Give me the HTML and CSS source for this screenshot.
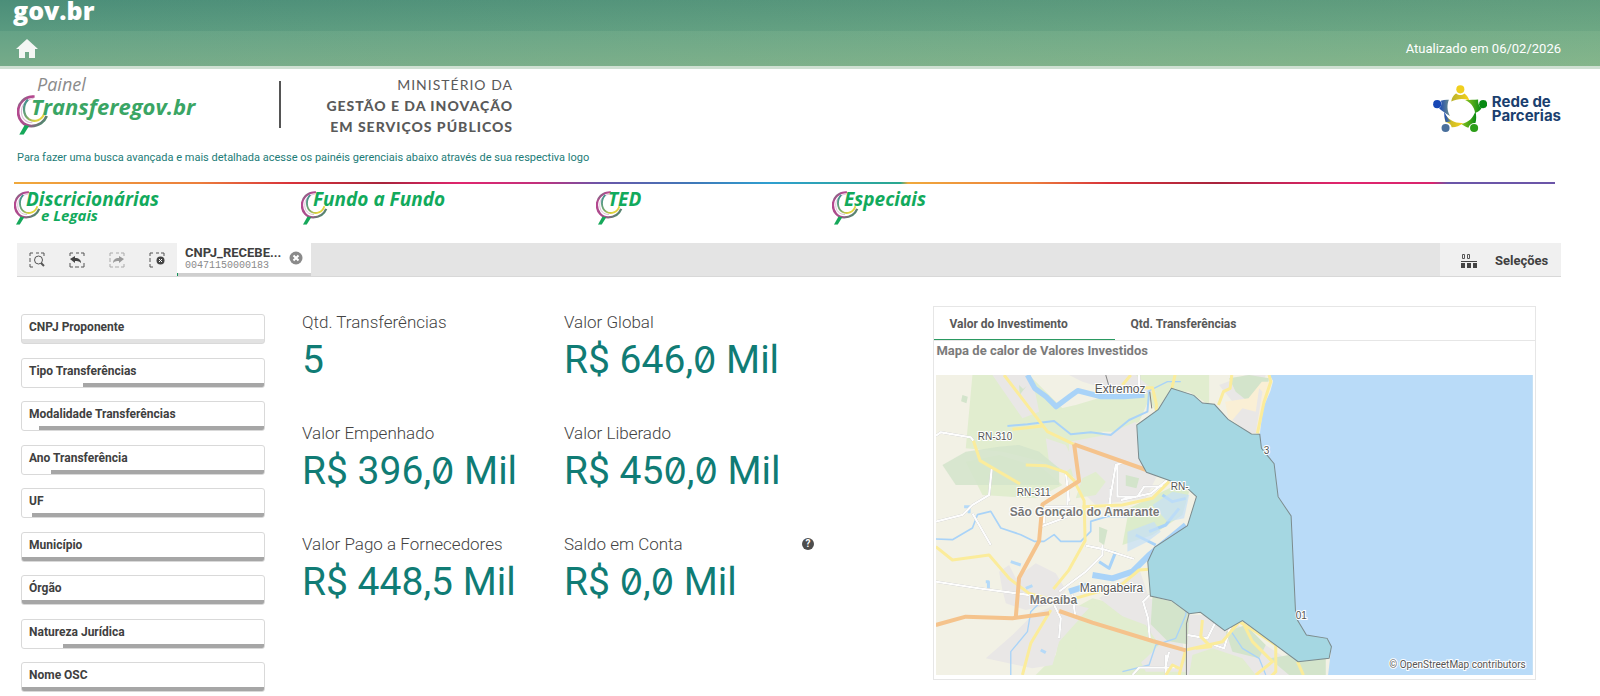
FILE: index.html
```html
<!DOCTYPE html>
<html lang="pt-BR">
<head>
    <meta charset="UTF-8">
    <meta name="viewport" content="width=device-width, initial-scale=1.0">
    <title>Painel Transferegov.br</title>
    <link rel="stylesheet" href="styles.css">
</head>
<body>
    <!-- Símbolos reutilizados -->
    <svg class="symbols" aria-hidden="true">
        <defs>
            <linearGradient id="ring" x1="0" y1="0" x2="1" y2="1">
                <stop offset="0" stop-color="#3f9c74"/>
                <stop offset="0.2" stop-color="#b5478f"/>
                <stop offset="0.65" stop-color="#a8508c"/>
                <stop offset="1" stop-color="#25a55f"/>
            </linearGradient>
            <linearGradient id="ring-in" x1="0" y1="0" x2="1" y2="1">
                <stop offset="0" stop-color="#3d8f96"/>
                <stop offset="0.5" stop-color="#7aa86a"/>
                <stop offset="0.8" stop-color="#e3d43c"/>
            </linearGradient>
            <symbol id="swirl" viewBox="0 0 30 36">
                <path d="M16 1C7 1 1 7 1 15c0 7 5 13 12 13 7 0 12-4 14-9" fill="none" stroke="url(#ring)" stroke-width="2.500"/>
                <path d="M15 3C8 4 4 9 4 15c0 6 4 10 10 10" fill="none" stroke="#d9bcd5" stroke-width="1"/>
                <path d="M10 4c-5 5-5 14 1 18 5 3 12 1 14-6" fill="none" stroke="url(#ring-in)" stroke-width="2"/>
                <path d="M7 27l4 1-5 8H2z" fill="#16a85a"/>
            </symbol>
        </defs>
    </svg>

    <header class="topbar">
        <a class="govbr" href="#">gov.br</a>
        <div class="topbar-row">
            <a class="home" href="#" aria-label="Início">
                <svg viewBox="0 0 22 20" width="22" height="20"><path d="M11 0L0 10h3v9h6v-6h4v6h6v-9h3z" fill="#f4f6f4"/></svg>
            </a>
            <span class="updated">Atualizado em 06/02/2026</span>
        </div>
    </header>

    <section class="brand">
        <div class="brand-logo">
            <svg class="brand-swirl" viewBox="0 0 30 36"><use href="#swirl"/></svg>
            <div class="brand-text">
                <span class="brand-top">Painel</span>
                <span class="brand-name">Transferegov.br</span>
            </div>
        </div>
        <div class="ministry">
            MINISTÉRIO DA<br>
            <b>GESTÃO E DA INOVAÇÃO</b><br>
            <b>EM SERVIÇOS PÚBLICOS</b>
        </div>
        <div class="rede">
            <svg viewBox="0 0 160 140" width="54" height="47">
                <defs>
                    <linearGradient id="rb"><stop offset="0" stop-color="#1747b5"/><stop offset="1" stop-color="#6f8f8a"/></linearGradient>
                    <linearGradient id="rg"><stop offset="0" stop-color="#8fc31f"/><stop offset="1" stop-color="#078a12"/></linearGradient>
                    <linearGradient id="ry"><stop offset="0" stop-color="#b9b12e"/><stop offset="1" stop-color="#f6d21a"/></linearGradient>
                </defs>
                <circle cx="81" cy="13" r="12" fill="#f0cf1e"/>
                <circle cx="12" cy="57" r="12" fill="#1747b5"/>
                <circle cx="149" cy="57" r="12" fill="#078a12"/>
                <circle cx="37" cy="128" r="12" fill="#496f9c"/>
                <circle cx="122" cy="128" r="12" fill="#2c9d18"/>
                <path d="M54 49c2-13 9-22 15-24 7 6 17 6 24 0 8 5 13 14 15 21-18-7-37-5-54 3z" fill="url(#ry)"/>
                <path d="M95 45c14-1 28-1 39-2-1 10 2 20 10 26-5 8-11 12-19 14-3-18-13-30-30-38z" fill="url(#rg)"/>
                <path d="M126 78c3 12 3 26 0 35-10-1-18 5-21 14-9-2-15-7-21-11 22-5 34-17 42-38z" fill="url(#rg)"/>
                <path d="M90 113c-11 8-24 14-35 13-1-8-9-15-18-15-3-8-3-16-2-23 14 18 32 27 55 25z" fill="url(#ry)"/>
                <path d="M53 109c-6 1-11 2-15 1-4-8-5-20-5-30 7 14 13 22 20 29z" fill="url(#rb)"/>
                <path d="M50 92C36 84 26 77 18 70c7-5 8-17 5-23 8-3 17-4 24-3-6 14-6 32 3 48z" fill="url(#rb)"/>
            </svg>
            <span class="rede-text">Rede de<br>Parcerias</span>
        </div>
    </section>

    <p class="hint">Para fazer uma busca avançada e mais detalhada acesse os painéis gerenciais abaixo através de sua respectiva logo</p>

    <nav class="panels">
        <a class="panel" href="#"><svg class="panel-swirl" viewBox="0 0 30 36"><use href="#swirl"/></svg><span>Discricionárias<small>e Legais</small></span></a>
        <a class="panel" href="#"><svg class="panel-swirl" viewBox="0 0 30 36"><use href="#swirl"/></svg><span>Fundo a Fundo</span></a>
        <a class="panel" href="#"><svg class="panel-swirl" viewBox="0 0 30 36"><use href="#swirl"/></svg><span>TED</span></a>
        <a class="panel" href="#"><svg class="panel-swirl" viewBox="0 0 30 36"><use href="#swirl"/></svg><span>Especiais</span></a>
    </nav>

    <!-- Barra de seleções -->
    <div class="selections">
        <div class="sel-tools">
            <button type="button" aria-label="Pesquisa inteligente">
                <svg viewBox="0 0 16 16" width="16" height="16" fill="none" stroke="#555">
                    <path d="M1 4V1h3M7 1h3M12 1h3v3M1 6v4M1 12v3h3"/>
                    <circle cx="9.500" cy="8" r="4"/><path d="M12 11l3 3" stroke-width="2"/>
                </svg>
            </button>
            <button type="button" aria-label="Voltar">
                <svg viewBox="0 0 16 16" width="16" height="16" fill="none" stroke="#555">
                    <path d="M1 4V1h3M7 1h3M12 1h3v3M1 11v4h3M6 15h4M12 15h3v-4"/>
                    <path d="M1 7l5-3v2c4 0 6 2 6 5-2-2-4-2-6-2v2z" fill="#444" stroke="none"/>
                </svg>
            </button>
            <button type="button" aria-label="Avançar" disabled>
                <svg viewBox="0 0 16 16" width="16" height="16" fill="none" stroke="#aaa">
                    <path d="M1 4V1h3M7 1h3M12 1h3v3M1 6v4M1 12v3h3M6 15h4M12 15h3v-3"/>
                    <path d="M15 7l-5-3v2c-4 0-6 2-6 5 2-2 4-2 6-2v2z" fill="#999" stroke="none"/>
                </svg>
            </button>
            <button type="button" aria-label="Limpar todas as seleções">
                <svg viewBox="0 0 16 16" width="16" height="16" fill="none" stroke="#555">
                    <path d="M1 4V1h3M7 1h3M12 1h3v3M1 6v4M1 12v3h3"/>
                    <circle cx="11.500" cy="8.500" r="4" fill="#444" stroke="none"/><path d="M10 7l3 3M13 7l-3 3" stroke="#fff"/>
                </svg>
            </button>
        </div>
        <div class="chip">
            <div class="chip-text">
                <b>CNPJ_RECEBE...</b>
                <span>00471150000183</span>
            </div>
            <button type="button" aria-label="Limpar seleção">
                <svg viewBox="0 0 14 14" width="14" height="14"><circle cx="7" cy="7" r="6.500" fill="#8a8a8a"/><path d="M4.500 4.500l5 5M9.500 4.500l-5 5" stroke="#fff" stroke-width="2"/></svg>
            </button>
        </div>
        <button type="button" class="sel-open">
            <svg viewBox="0 0 16 16" width="16" height="16"><path d="M1.500 1.500h2v4h-2zM6.500 1.500h2v4h-2z" fill="none" stroke="#555"/><path d="M0 8h16v1H0zM0 10h4v5H0zM6 10h4v5H6zM12 10h4v5h-4z" fill="#444"/></svg>
            Seleções
        </button>
    </div>

    <main class="content">
        <div class="filters">
            <button type="button" class="filter empty">CNPJ Proponente</button>
            <button type="button" class="filter" style="--sel: 25%">Tipo Transferências</button>
            <button type="button" class="filter" style="--sel: 7%">Modalidade Transferências</button>
            <button type="button" class="filter" style="--sel: 12%">Ano Transferência</button>
            <button type="button" class="filter" style="--sel: 4%">UF</button>
            <button type="button" class="filter">Município</button>
            <button type="button" class="filter">Órgão</button>
            <button type="button" class="filter" style="--sel: 17%">Natureza Jurídica</button>
            <button type="button" class="filter">Nome OSC</button>
        </div>

        <div class="kpis">
            <div class="kpi"><h2>Qtd. Transferências</h2><p>5</p></div>
            <div class="kpi"><h2>Valor Global</h2><p>R$ 646,<span class="zero">0</span> Mil</p></div>
            <div class="kpi"><h2>Valor Empenhado</h2><p>R$ 396,<span class="zero">0</span> Mil</p></div>
            <div class="kpi"><h2>Valor Liberado</h2><p>R$ 45<span class="zero">0</span>,<span class="zero">0</span> Mil</p></div>
            <div class="kpi"><h2>Valor Pago a Fornecedores</h2><p>R$ 448,5 Mil</p></div>
            <div class="kpi">
                <h2>Saldo em Conta <button type="button" class="help" aria-label="Ajuda">?</button></h2>
                <p>R$ <span class="zero">0</span>,<span class="zero">0</span> Mil</p>
            </div>
        </div>

        <section class="map-card">
            <div class="tabs" role="tablist">
                <button type="button" role="tab" class="tab active" aria-selected="true">Valor do Investimento</button>
                <button type="button" role="tab" class="tab" aria-selected="false">Qtd. Transferências</button>
            </div>
            <h3>Mapa de calor de Valores Investidos</h3>
            <svg class="map" viewBox="0 0 597 300" preserveAspectRatio="xMidYMid slice" role="img" aria-label="Mapa de calor">
                <g transform="scale(0.33334)">
                    <rect width="1791" height="900" fill="#f2f1e5"/>
                    <!-- vegetação e áreas urbanas -->
                    <g fill="#e1edcf">
                        <path d="M110 0h170l120 120 150 80-40 130-90-20-100-50-120-30-110-10z"/>
                        <path d="M330 110l90-20 100-30 130-10-40 90-60 30-150 0z"/>
                        <path d="M380 720l90-50 120 30 60 80 100 50 100 70H300l60-60z"/>
                        <path d="M600 0h220v90l-60-40-60 0-40 60z"/>
                        <path d="M90 260l100-20 130 40 60 50-80 40-160-10z"/>
                    </g>
                    <g fill="#e9e7e6">
                        <path d="M170 0h110l20 60 10 50-50 20z"/>
                        <path d="M400 0h200l60 50-50 10-70-5-50-20-50-15z"/>
                        <path d="M400 200l110-20 90-40 10 110 60 40-40 80-150 20-60-60-20-70z"/>
                        <path d="M330 190l60 20 30 60-30 20-50-30z"/>
                        <path d="M230 780l60-60 90-40 80 20-90 100-20 70-60 10-140-30z"/>
                        <path d="M190 590l30-20 20 40 60-45 60 30 30 50-30 40-90 20-60-20-10-40z"/>
                        <path d="M490 670l120-90 30 90 90 30 20 190H630l-30-60 20-60z"/>
                        <path d="M752 720h120l70 60 140 90 60 30H750z"/>
                        <path d="M850 30l80-30h60l-50 140z"/>
                        <path d="M960 0l30 20-30 150-50-30z"/>
                    </g>
                    <g fill="#e1edcf">
                        <path d="M430 730l40-40 80 30 80 30 40 60-40 40-60 50-100-30-50-50z"/>
                        <path d="M770 840l60-20 90 30 40 50H760z"/>
                        <path d="M440 310l40-20 30 30-30 40-60 10z"/>
                    </g>
                    <g fill="#d3e4cb">
                        <path d="M90 230l100-15 60-5 60 20 60 50 0 50-310 0-40-60z" opacity="0.850"/>
                        <path d="M650 665l60 15 50 38-5 90-60-10-50-50z"/>
                        <path d="M870 770l60-20 60 60-20 40-80-20z"/>
                        <path d="M880 10l60-10 60 10-10 50-40 30-50-40z"/>
                        <path d="M490 455l25 10-10 45-15-10zM570 300l40 10-8 30-32-8z"/>
                        <path d="M250 30l12 12 10-8-20 25zM80 60l16 5-4 20-16-6z"/>
                        <path d="M1060 840l110-30 0 90H1060l-60-50z"/>
                    </g>
                    <path d="M868 80l70-10 40-50 30 0-40 155-20 0-70-45z" fill="#faefd5"/>
                    <path d="M920 100l40 10 10-70 10 10-20 125-20 0-50-40z" fill="#e9e7e6"/>
                    <path d="M580 400l140-70 40 20-20 70-90 60-90 30z" fill="#dceccb"/>
                    <!-- água -->
                    <path d="M1002 0l10 18-8 30-22 50-10 80 5 42 38 46 12 99 39 58 14 304 32 53 62 10 13 25-10 85H1791V0z" fill="#b9dbf8"/>
                    <g fill="none" stroke="#a9d3f8" stroke-linejoin="round">
                        <path d="M275 0l22 40 34 25 30 30 40-30 25-18 70 18 70 0 60-5" stroke-width="16"/>
                        <path d="M640 50l-5 60-55 25-55 45-60-8-60 6-50-40-80 10-60 5" stroke-width="6"/>
                        <path d="M0 492l50 2 60-35 15-40 40-10 30 50 60 20 40 20 30 0 30-20 20 20 60 0 30-30 0-30 50-15 60 0" stroke-width="5"/>
                        <path d="M400 650l60-20M470 600l60 10 60-20 50-50 50-40 60-50" stroke-width="18"/>
                        <path d="M640 470l50-20 40-50M600 480l60 30M490 560l30 20 20-50M680 360l30 20 40-10" stroke-width="9"/>
                        <path d="M225 900v-70l50-60 10-60 30-30M560 890l80-20 20-60 60-20 30-70 5-60M880 760l40 60 50 30 20 50M635 50l60-30 40 0" stroke-width="4"/>
                        <path d="M225 560l30 10M150 620h8v20M270 640l20-8M85 395h15v20M315 825l15 8" stroke-width="9" stroke="#b5daf8"/>
                    </g>
                    <g fill="#c5e0f6">
                        <path d="M650 390l60-40 50 10-15 70-50 10z" opacity="0.700"/>
                        <path d="M575 470l80-30 20 30-40 30-60 30z" opacity="0.700"/>
                    </g>
                    <!-- ruas e estradas -->
                    <g class="road-local">
                        <path d="M0 182l15-10 90 15 8 10M0 440l80-20 30-30 50-30 8-80M110 415l55 95M0 620l130 20 150 20M315 455l80-30M395 390v-40M325 445l0-50 90 0M400 380l-10-90M520 390l20-120 30-10M530 345h-6v50M545 265v100h60l20-30 60 0M555 375l90-20 50-40M370 650l80-60 50-50 0-30M450 512l50 10 95 30M355 690l20 40-5 60M410 660l8 60M642 660l-20 20 15 50 5 60M590 900l20-22h110M610 0v50M690 840v60M700 830l-10 40M755 780l60 10 30-60 40 20-20 70-30-10"/>
                    </g>
                    <g class="road">
                        <path d="M205 0l130 170 80 38"/>
                        <path d="M230 163l90-10M113 197l20 60 120 70M270 270l60 2 60 20 25 25 30 60 3 120-50 90-45 55"/>
                        <path d="M0 515l50 40 110-15 60 70 60 45 70 20M400 675l90-25 60-15 60-50 30-2M345 705l-60 100-25 95M440 395l120-5 90-20 50-50"/>
                        <path d="M620 38h30l12 50 0 20M718 0l-10 40M888 0l-5 40-20 10-15 40M585 0l-25 30M1000 0l5 20-20 60-20 95"/>
                        <path d="M730 900l20-75 110-25 50-60 50 30 60 40 0 80-20 20M800 735l-5 50 30 30-45 5M920 740l30 60 60 60-50 40M1085 860l18 40M690 900l20-30 20 10"/>
                    </g>
                    <g class="highway">
                        <path d="M415 208l217 77M415 208l15 110-110 70-10 110-60 110-10 120"/>
                        <path d="M0 750l90-25 140 5 110-15M370 708l100 35 180 55 100 28"/>
                    </g>
                    <!-- limites municipais -->
                    <path class="limit" d="M760 716l-8 30v154M510 0l10 35M642 50l6 50"/>
                    <!-- Natal -->
                    <path class="region" d="M707 40l67 21 26 23 36 4 41 45 70 44 25 1 5 42 38 46 12 99 39 58 14 304 32 53 62 10 13 25-7 35-93 10-167-123-53 30-73-55-34 4-53-39-63-14-8-103 20-43 99-65 27-87-30-28-55-22-65-23-23-42-6-100 65-47z"/>
                </g>
                <g class="map-labels">
                    <text x="159" y="18" class="town">Extremoz</text>
                    <text x="42" y="65">RN-310</text>
                    <text x="81" y="121">RN-311</text>
                    <text x="235" y="115">RN-</text>
                    <text x="74" y="141" class="city">São Gonçalo do Amarante</text>
                    <text x="144" y="217" class="town">Mangabeira</text>
                    <text x="94" y="229" class="city">Macaíba</text>
                    <text x="328" y="79">3</text>
                    <text x="360" y="244">01</text>
                    <text x="590" y="293" class="credit">© OpenStreetMap contributors</text>
                </g>
            </svg>
        </section>
    </main>
</body>
</html>
```
FILE: styles.css
```css
* {
    box-sizing: border-box;
}

body {
    margin: 0;
    background-color: #fff;
    color: #404040;
    font-family: Roboto, "Liberation Sans", sans-serif;
    font-size: 13px;
}

button {
    font-family: inherit;
    padding: 0;
    border: none;
    background: none;
    color: inherit;
    cursor: pointer;
}

a {
    text-decoration: none;
}

svg {
    display: block;
}

.symbols {
    position: absolute;
    width: 0;
    height: 0;
}

/* Topo */
.topbar {
    height: 69px;
    overflow: hidden;
    border-bottom: 3px solid #cfe0d2;
    background:
        linear-gradient(to right, rgba(255, 255, 255, 0), rgba(200, 230, 150, 0.18)),
        linear-gradient(to bottom, #4b8e79 0, #5a9a80 31px, #65a286 31px, #76ab89 66px);
}

.govbr {
    display: block;
    height: 31px;
    padding-left: 13px;
    line-height: 20px;
    font-family: "Open Sans", sans-serif;
    font-size: 25px;
    font-weight: 800;
    color: #fff;
}

.topbar-row {
    display: flex;
    justify-content: space-between;
    align-items: center;
    height: 35px;
    padding: 0 39px 0 16px;
}

.updated {
    color: #fff;
    font-size: 13px;
}

/* Marca */
.brand {
    display: flex;
    align-items: flex-start;
    height: 78px;
    padding: 0 39px 0 17px;
}

.brand-logo {
    display: flex;
    width: 264px;
    height: 47px;
    margin-top: 12px;
    border-right: 2px solid #555;
}

.brand-swirl {
    flex: none;
    width: 33px;
    height: 40px;
    margin-top: 14px;
}

.brand-text {
    display: flex;
    flex-direction: column;
    margin: -8px 0 0 -19px;
    font-family: "Open Sans", sans-serif;
    font-style: italic;
}

.brand-top {
    padding-left: 6px;
    font-size: 18px;
    line-height: 22px;
    font-weight: 400;
    color: #8b8b8b;
}

.brand-name {
    font-size: 22px;
    line-height: 22px;
    font-weight: 700;
    color: #3aa564;
}

.ministry {
    width: 232px;
    margin-top: 5px;
    text-align: right;
    font-family: Lato, sans-serif;
    font-size: 14px;
    line-height: 21px;
    letter-spacing: 1px;
    color: #5a5a5a;
}

.ministry b {
    font-weight: 900;
}

.rede {
    display: flex;
    align-items: center;
    gap: 5px;
    margin: 16px 0 0 auto;
}

.rede-text {
    font-family: Inter, sans-serif;
    font-size: 15px;
    line-height: 14px;
    font-weight: 700;
    color: #1b3f6f;
}

.hint {
    margin: 0;
    padding: 3px 17px 0;
    height: 35px;
    line-height: 16px;
    font-size: 11px;
    color: #1c7c77;
}

/* Links para os painéis */
.panels {
    display: grid;
    grid-template-columns: 287fr 295fr 236fr 723fr;
    height: 61px;
    margin: 0 45px 0 14px;
    padding-top: 7px;
    border-top: 2px solid;
    border-image: linear-gradient(to right, #f0a93c 0, #ec7f3c 12%, #d8323a 18%, #a8243c 24%, #e0256e 29%, #c2307c 34%, #6b55a8 38%, #3f78b8 44%, #2f9fd0 49%, #2aa88e 57.5%, #f0a93c 58%, #ec7f3c 66%, #d8323a 71%, #a8243c 78%, #e0256e 86%, #d8256e 92%, #6b55a8 93%, #6b55a8 100%) 1;
}

.panel {
    display: flex;
    align-items: flex-start;
    font-family: "Open Sans", sans-serif;
    font-size: 19px;
    line-height: 17px;
    font-style: italic;
    font-weight: 700;
    color: #12aa5c;
}

.panel-swirl {
    flex: none;
    width: 28px;
    height: 34px;
    margin-right: -16px;
}

.panel small {
    display: block;
    padding-left: 15px;
    font-size: 15px;
    line-height: 15px;
}

/* Barra de seleções */
.selections {
    display: flex;
    height: 34px;
    margin: 0 39px 0 17px;
    background-color: #e4e4e4;
    border-bottom: 1px solid #d8d8d8;
}

.sel-tools {
    display: flex;
    background-color: #f0f0f0;
}

.sel-tools button {
    display: grid;
    place-items: center;
    width: 40px;
}

.chip {
    display: flex;
    align-items: center;
    justify-content: space-between;
    width: 134px;
    padding: 0 8px;
    background-color: #fff;
    border: 0 solid;
    border-bottom-width: 3px;
    border-image: linear-gradient(to right, #12935a 2px, #cfcfcf 2px) 1;
}

.chip-text {
    display: flex;
    flex-direction: column;
}

.chip-text b {
    font-size: 13px;
    line-height: 14px;
}

.chip-text span {
    font-family: "Liberation Mono", monospace;
    font-size: 10px;
    line-height: 11px;
    color: #8a8a8a;
}

.sel-open {
    display: flex;
    align-items: center;
    gap: 18px;
    margin-left: auto;
    width: 121px;
    padding: 2px 0 0 21px;
    background-color: #f0f0f0;
    font-size: 13px;
    font-weight: 700;
}

/* Conteúdo */
.content {
    display: grid;
    grid-template-columns: 244px 74fr 75fr;
    column-gap: 37px;
    align-items: start;
    padding: 29px 64px 0 21px;
}

.filters {
    display: flex;
    flex-direction: column;
    justify-content: space-between;
    height: 378px;
    margin-top: 8px;
}

.filter {
    --sel: 0%;
    height: 30px;
    padding: 0 7px 4px;
    border: 1px solid #d9d9d9;
    border-radius: 3px;
    text-align: left;
    font-size: 12px;
    font-weight: 700;
    background: linear-gradient(to right, #fff var(--sel), #a6a6a6 var(--sel)) bottom / 100% 4px no-repeat #fff;
}

.filter.empty {
    background: linear-gradient(#e2e2e2, #e2e2e2) bottom / 100% 4px no-repeat #fff;
}

.kpis {
    display: grid;
    grid-template-columns: 262px 1fr;
    grid-auto-rows: 111px;
    padding-top: 4px;
}

.kpi h2 {
    display: flex;
    align-items: center;
    justify-content: space-between;
    max-width: 250px;
    margin: 0;
    font-size: 17px;
    line-height: 24px;
    font-weight: 300;
    color: #444;
}

.kpi p {
    margin: 0;
    font-size: 39px;
    line-height: 52px;
    font-weight: 400;
    color: #107c75;
}

.zero {
    font-family: Inter, sans-serif;
    font-size: 37px;
    line-height: 50px;
    font-feature-settings: "zero";
}

.help {
    width: 12px;
    height: 12px;
    border-radius: 50%;
    background-color: #4d4d4d;
    color: #fff;
    font-size: 10px;
    line-height: 12px;
    font-weight: 700;
    text-align: center;
}

/* Mapa */
.map-card {
    padding: 0 2px 4px;
    border: 1px solid #e6e6e6;
}

.tabs {
    display: flex;
    height: 34px;
    margin: 0 -2px;
    border-bottom: 1px solid #e6e6e6;
}

.tab {
    width: 181px;
    padding: 2px 0 0 15px;
    border-bottom: 1px solid transparent;
    text-align: left;
    font-size: 12px;
    font-weight: 700;
    color: #595959;
}

.tab.active {
    border-bottom-color: #2a9961;
}

.map-card h3 {
    margin: 0;
    height: 34px;
    line-height: 20px;
    font-size: 13px;
    font-weight: 700;
    color: #7b7b7b;
}

.map {
    width: 100%;
    height: 300px;
}

.road-local {
    fill: none;
    stroke: #fdfdfd;
    stroke-width: 7;
    filter: drop-shadow(0 0 1px #aaa);
}

.road {
    fill: none;
    stroke: #fbec9b;
    stroke-width: 9;
    stroke-linejoin: round;
}

.highway {
    fill: none;
    stroke: #f5c38c;
    stroke-width: 12;
    stroke-linejoin: round;
}

.limit {
    fill: none;
    stroke: #858585;
    stroke-width: 3;
}

.region {
    fill: #a5d7e2;
    stroke: #7b8b8e;
    stroke-width: 3;
}

.map-labels text {
    font-family: "Liberation Sans", Arial, sans-serif;
    font-size: 10px;
    fill: #555;
    stroke: #fff;
    stroke-width: 2px;
    paint-order: stroke;
}

.map-labels .town {
    font-size: 12px;
}

.map-labels .city {
    font-size: 12px;
    font-weight: 700;
    fill: #777;
}

.map-labels .credit {
    font-family: Roboto, sans-serif;
    font-size: 10px;
    text-anchor: end;
}
```
